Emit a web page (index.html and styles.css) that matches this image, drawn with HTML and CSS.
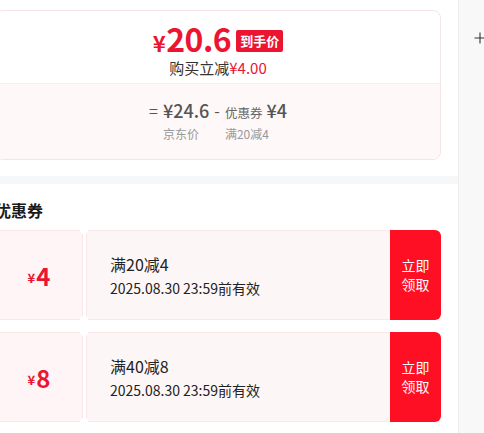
FILE: index.html
```html
<!DOCTYPE html>
<html lang="zh">
<head>
    <meta charset="UTF-8">
    <meta name="viewport" content="width=device-width, initial-scale=1.0">
    <title>到手价 优惠券</title>
    <link rel="stylesheet" href="styles.css">
</head>
<body>
<div class="page">
    <main class="main">
        <section class="price-card">
            <div class="price-top">
                <div class="price-row">
                    <span class="price"><span class="yen">¥</span>20.6</span>
                    <span class="tag">到手价</span>
                </div>
                <div class="save">购买立减<em>¥4.00</em></div>
            </div>
            <div class="price-calc">
                <span class="op">=</span>
                <div class="calc-item">
                    <div class="calc-val">¥24.6</div>
                    <div class="calc-label">京东价</div>
                </div>
                <span class="op">-</span>
                <div class="calc-item">
                    <div class="calc-val"><small>优惠券</small> ¥4</div>
                    <div class="calc-label">满20减4</div>
                </div>
            </div>
        </section>

        <div class="divider"></div>

        <section class="coupons">
            <h3>优惠券</h3>
            <div class="coupon">
                <div class="coupon-stub"><span class="yen">¥</span>4</div>
                <div class="coupon-body">
                    <div class="coupon-title">满20减4</div>
                    <div class="coupon-date">2025.08.30 23:59前有效</div>
                </div>
                <button class="coupon-btn">立即<br>领取</button>
            </div>
            <div class="coupon">
                <div class="coupon-stub"><span class="yen">¥</span>8</div>
                <div class="coupon-body">
                    <div class="coupon-title">满40减8</div>
                    <div class="coupon-date">2025.08.30 23:59前有效</div>
                </div>
                <button class="coupon-btn">立即<br>领取</button>
            </div>
        </section>
    </main>

    <aside class="side">
        <svg class="plus" width="12" height="12" viewBox="0 0 12 12">
            <path d="M6 0.5V11.5M0.5 6H11.5" stroke="#333" stroke-width="1.1" fill="none"/>
        </svg>
    </aside>
</div>
</body>
</html>
```

FILE: styles.css
```css
body {
    margin: 0;
    font-family: "Noto Sans CJK SC", "Noto Sans", sans-serif;
    color: #1a1a1a;
    background: #fff;
    overflow: hidden;
}
.page {
    display: flex;
    height: 433px;
}
.main {
    width: 480px;
    flex-shrink: 0;
    margin-left: -22px;
    background: #fff;
    padding-top: 10px;
}
.price-card {
    margin: 0 17px 16px;
    border: 1px solid #f5e4e7;
    border-radius: 8px;
    overflow: hidden;
}
.price-top {
    padding: 9px 0 5px;
    text-align: center;
}
.price-row {
    display: flex;
    justify-content: center;
    height: 36px;
}
.price {
    color: #ec1531;
    font-weight: bold;
    font-size: 32px;
    line-height: 36px;
    letter-spacing: -0.5px;
}
.price .yen {
    font-size: 22px;
    line-height: 1;
    margin-right: 1px;
}
.tag {
    align-self: flex-end;
    margin: 0 0 4px 5px;
    background: #ec1531;
    color: #fff;
    font-size: 13px;
    font-weight: bold;
    line-height: 22px;
    padding: 0 4px;
    border-radius: 2px;
}
.save {
    margin-top: 2px;
    font-size: 15px;
    line-height: 20px;
    height: 20px;
    color: #333;
}
.save em {
    font-style: normal;
    color: #ec1531;
}
.price-calc {
    display: flex;
    justify-content: center;
    align-items: flex-start;
    gap: 5px;
    padding: 15px 0 16px;
    background: #fef8f8;
    border-top: 1px solid #f8eeef;
    color: #555;
}
.op {
    font-size: 16px;
    line-height: 22px;
}
.calc-val {
    font-size: 18px;
    font-weight: 500;
    line-height: 22px;
    height: 22px;
}
.calc-val small {
    font-size: 12.5px;
    font-weight: normal;
    line-height: 1;
    color: #666;
}
.calc-label {
    margin-top: 4px;
    font-size: 12px;
    line-height: 18px;
    color: #999;
}
.divider {
    height: 8px;
    background: #f6f7f9;
}
.coupons {
    padding: 14px 17px 0;
}
.coupons h3 {
    margin: 0 0 8px;
    font-size: 16px;
    line-height: 24px;
    height: 24px;
    font-weight: bold;
}
.coupon {
    position: relative;
    display: flex;
    gap: 3px;
    height: 90px;
    margin-bottom: 12px;
}
.coupon::before,
.coupon::after {
    content: "";
    position: absolute;
    left: 85px;
    width: 8px;
    height: 8px;
    border-radius: 50%;
    background: #fff;
}
.coupon::before {
    top: -4px;
}
.coupon::after {
    bottom: -4px;
}
.coupon-stub {
    width: 86px;
    display: flex;
    align-items: center;
    justify-content: center;
    background: #fff5f6;
    border: 1px solid #f9e8ea;
    border-radius: 6px 0 0 6px;
    color: #ec1531;
    font-size: 24px;
    font-weight: bold;
}
.coupon-stub .yen {
    font-size: 13px;
    margin-top: 5px;
    margin-right: 1px;
}
.coupon-body {
    flex: 1;
    display: flex;
    flex-direction: column;
    justify-content: center;
    gap: 3px;
    padding-left: 23px;
    background: #fdf6f6;
    border: 1px solid #f9e8ea;
    border-right: none;
}
.coupon-title {
    font-size: 16px;
    line-height: 22px;
    color: #222;
}
.coupon-date {
    font-size: 14px;
    line-height: 20px;
    color: #222;
}
.coupon-btn {
    width: 51px;
    margin-left: -3px;
    border: none;
    border-radius: 0 6px 6px 0;
    background: #ff0f23;
    color: #fff;
    font-family: inherit;
    font-size: 14px;
    line-height: 19px;
    padding: 0;
}
.side {
    flex: 1;
    background: #f8f8f9;
    border-left: 1px solid #ededed;
    padding: 25px 0 0 15px;
}
```
